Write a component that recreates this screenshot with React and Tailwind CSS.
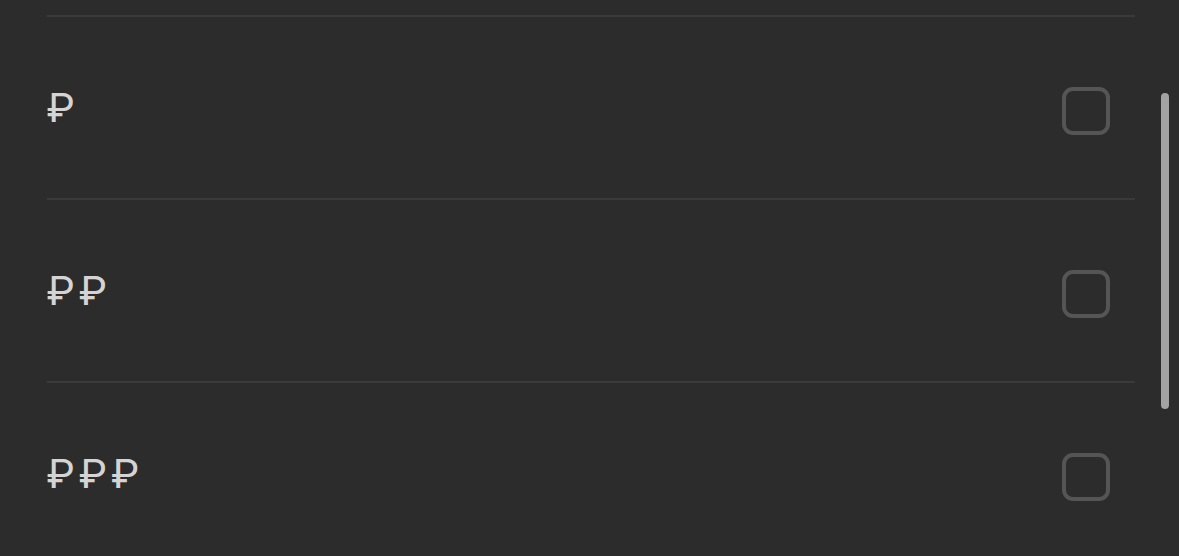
import React from 'react'

const rows = ['₽', '₽₽', '₽₽₽']

export default function App() {
  return (
    <div className="relative h-[556px] w-[1179px] overflow-hidden bg-[#2c2c2c] font-['Roboto',sans-serif]">
      <div className="pt-[15px] pl-[47px] pr-[44px]">
        {rows.map((r) => (
          <div key={r} className="flex h-[183px] items-center justify-between border-t-2 border-[#3a3a3a]">
            <span className="mt-[2px] text-[41px] leading-none tracking-[5px] text-[#d4d4d4]">{r}</span>
            <div className="mr-[25px] mt-[6px] h-[48px] w-[48px] rounded-[11px] border-[4px] border-[#555555]" />
          </div>
        ))}
      </div>
      <div className="absolute left-[1161px] top-[93px] h-[316px] w-[8px] rounded-full bg-[#a3a3a3]" />
    </div>
  )
}
